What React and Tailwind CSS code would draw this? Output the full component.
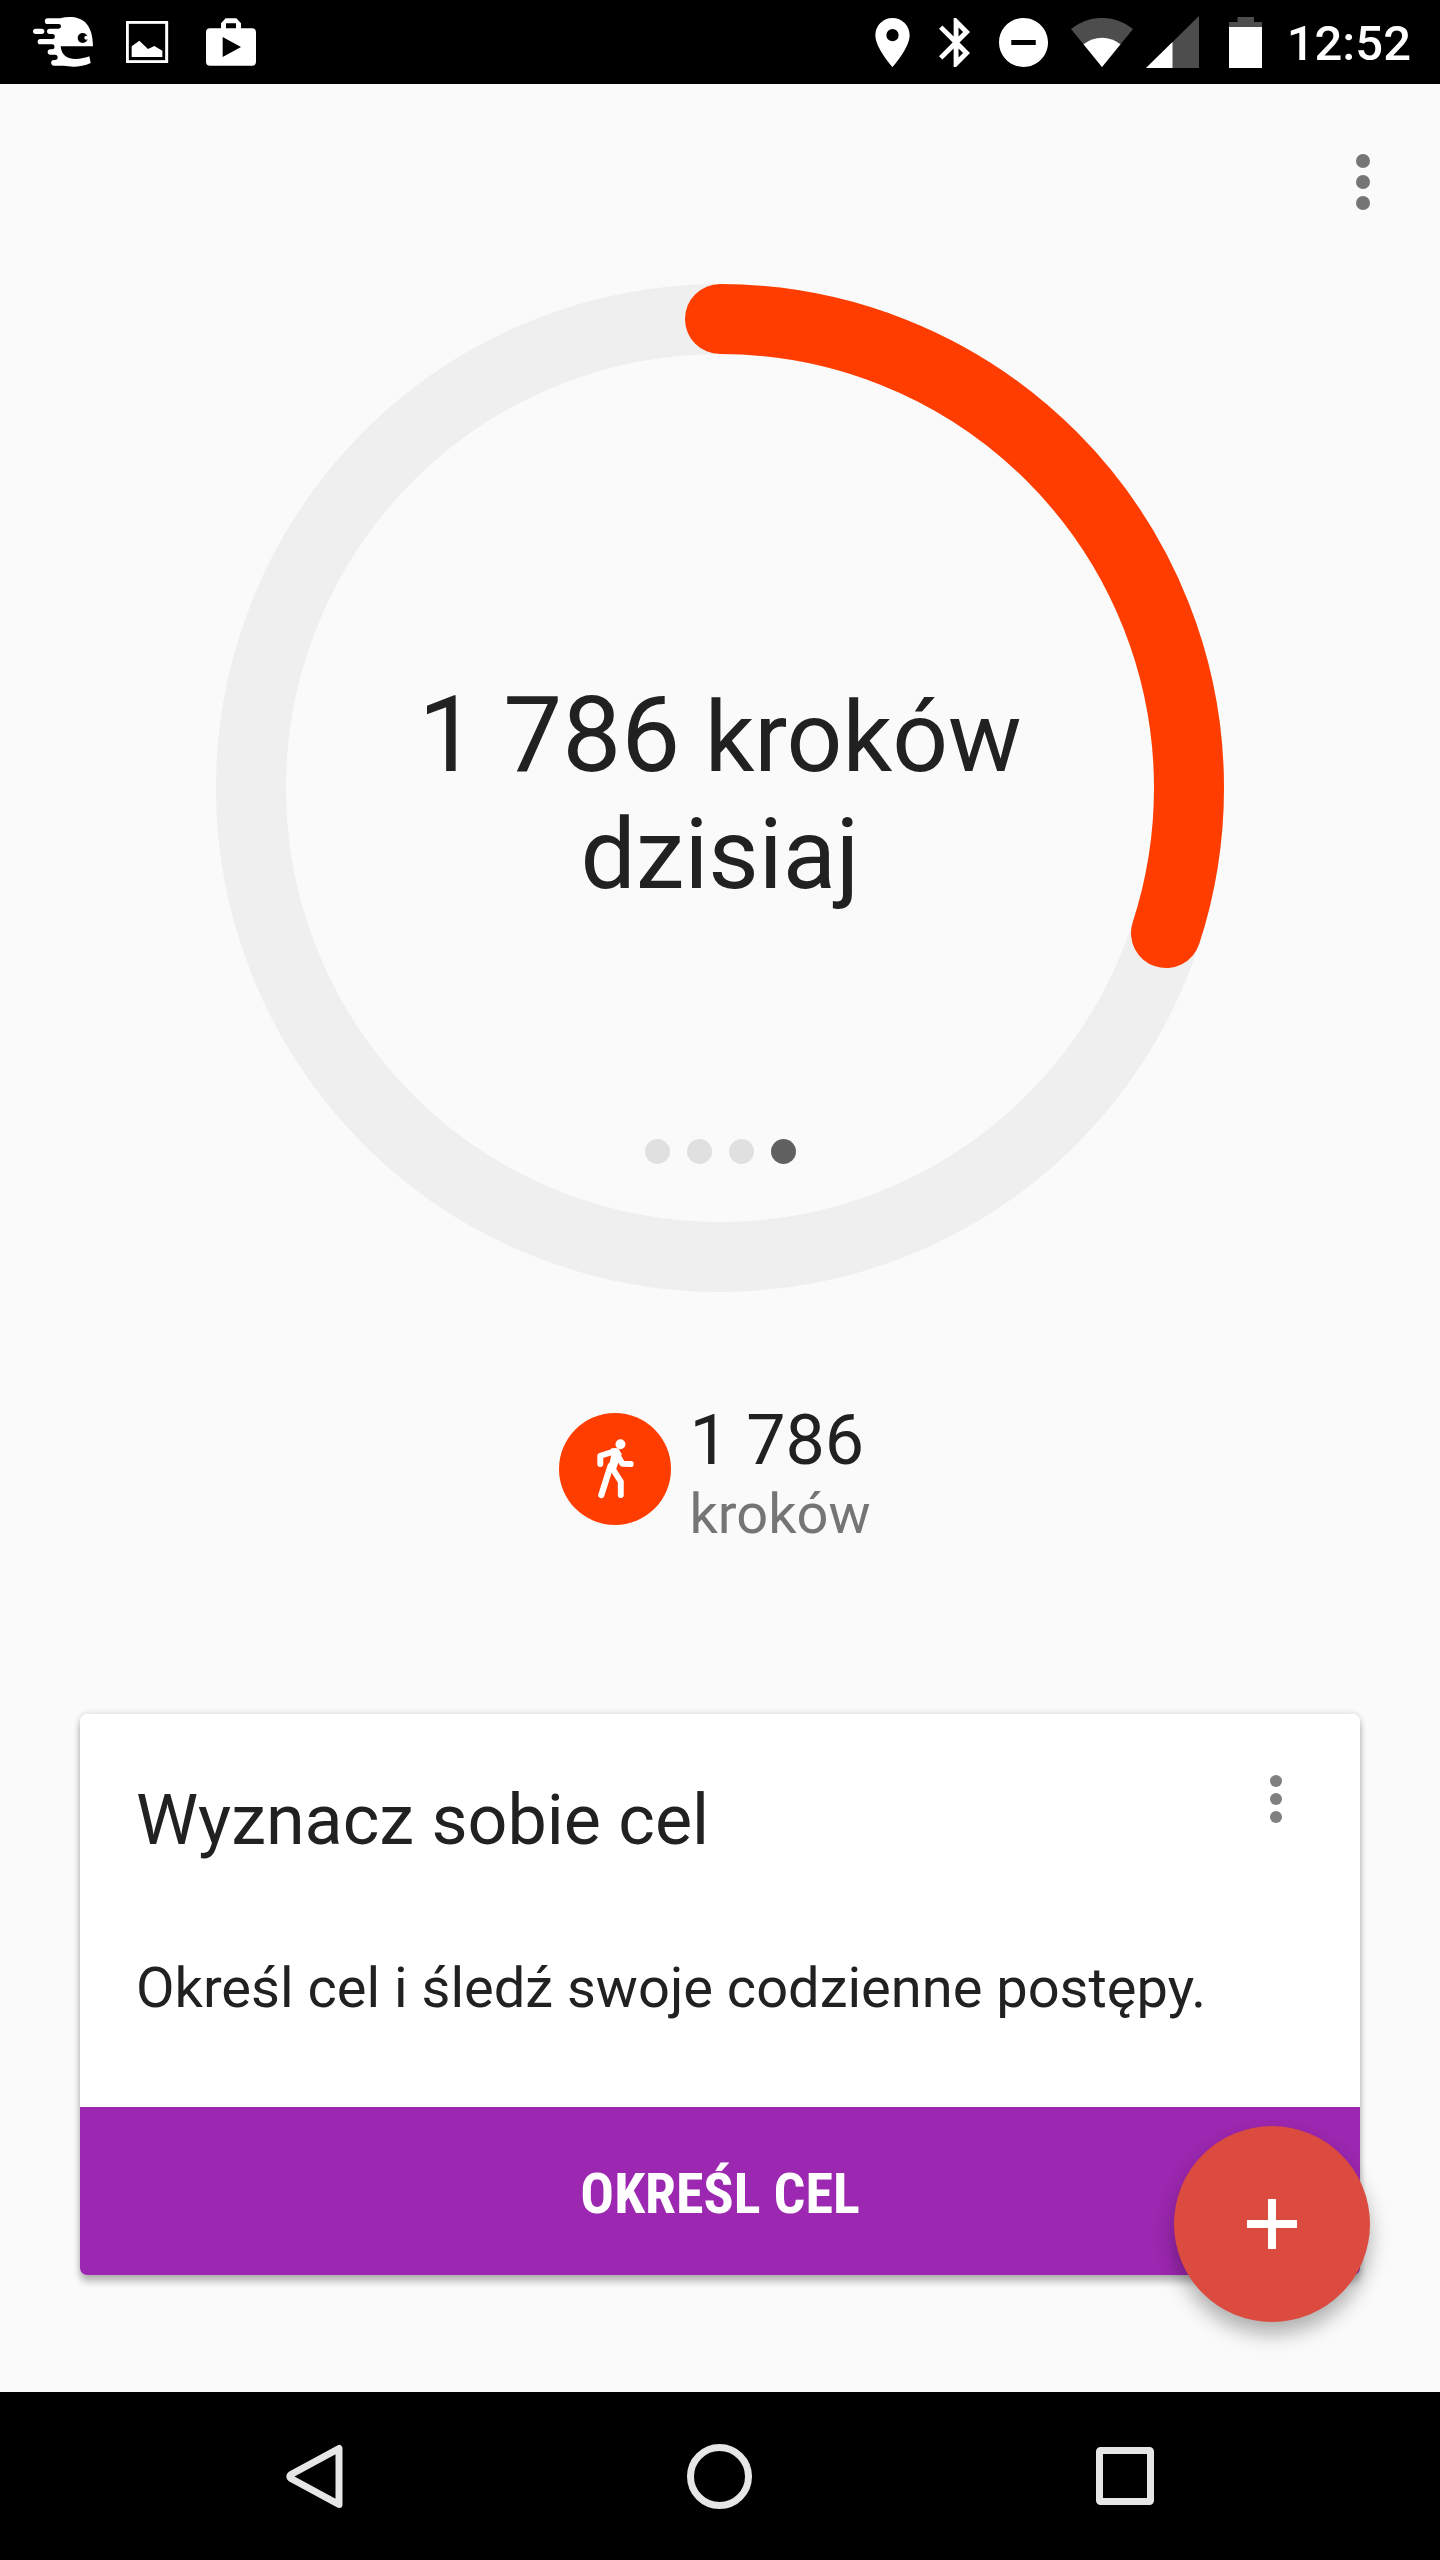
import React from "react";

const GOAL_PERCENT = 30;
const RING_RADIUS = 469;
const RING_LENGTH = 2 * Math.PI * RING_RADIUS;

const pages = ["Aktywność", "Dystans", "Kalorie", "Kroki"];

const RunnerIcon = () => (
  <svg viewBox="99 51 180 150" className="h-[50px] w-[60px]">
    <path
      fill="#fff"
      d="M143 55H180C225 44 279 52 279 139H182C184 168 205 177 225 177C243 177 258 173 268 169L272 189C250 199 225 202 205 199C195 197 188 197 180 197H162a8.5 8.5 0 0 1 0-17H165a8 8 0 0 0 0-16H151a8 8 0 0 1 0-16H156a7.5 7.5 0 0 0 0-15H121a8 8 0 0 1 0-16H157a7.5 7.5 0 0 0 0-15H149a8 8 0 0 1 0-16H176a7 7 0 0 0 0-14H143a8.5 8.5 0 0 1 0-17z"
    />
    <rect x="99" y="86" width="34" height="16" rx="8" fill="#fff" />
    <circle cx="248" cy="114" r="15" fill="#000" />
    <circle cx="259" cy="113" r="6" fill="#fff" />
  </svg>
);

const PictureIcon = () => (
  <svg viewBox="378 63 141 126" className="h-[42px] w-[47px]">
    <rect x="382" y="67" width="118" height="118" fill="none" stroke="#fff" strokeWidth="9" />
    <path fill="#fff" d="M395 171V139L418 122L444 147L463 138L487 152V171z" />
  </svg>
);

const StoreIcon = () => (
  <svg viewBox="618 50 150 144" className="h-12 w-[50px]">
    <path
      fill="#fff"
      fillRule="evenodd"
      d="M663 81V66L677 51H709L723 66V81H756a12 12 0 0 1 12 12V181a12 12 0 0 1-12 12H630a12 12 0 0 1-12-12V93a12 12 0 0 1 12-12zM678 66V81H708V66zM668 107V167L723 137z"
    />
  </svg>
);

const PinIcon = () => (
  <svg viewBox="5 2 14 20" className="h-[49px] w-[35px]">
    <path
      fill="#fff"
      d="M12 2C8.13 2 5 5.13 5 9c0 5.25 7 13 7 13s7-7.75 7-13c0-3.87-3.13-7-7-7zm0 9.5a2.5 2.5 0 0 1 0-5 2.5 2.5 0 0 1 0 5z"
    />
  </svg>
);

const BluetoothIcon = () => (
  <svg viewBox="5 2 12.71 20" className="h-[49px] w-[31px]">
    <path
      fill="#fff"
      d="M17.71 7.71L12 2h-1v7.59L6.41 5 5 6.41 10.59 12 5 17.59 6.41 19 11 14.41V22h1l5.71-5.71-4.3-4.29 4.3-4.29zM13 5.83l1.88 1.88L13 9.59V5.83zm1.88 10.46L13 18.17v-3.76l1.88 1.88z"
    />
  </svg>
);

const DoNotDisturbIcon = () => (
  <svg viewBox="2 2 20 20" className="size-[49px]">
    <path
      fill="#fff"
      d="M12 2C6.48 2 2 6.48 2 12s4.48 10 10 10 10-4.48 10-10S17.52 2 12 2zm5 11H7v-2h10v2z"
    />
  </svg>
);

const WifiIcon = () => (
  <svg viewBox="0 0 62 49" className="h-[49px] w-[62px]">
    <path fill="#4d4d4d" d="M31 49L0 11A49 49 0 0 1 62 11z" />
    <path fill="#fff" d="M31 49L12.5 26.3A29.5 29.5 0 0 1 49.5 26.3z" />
  </svg>
);

const SignalIcon = () => (
  <svg viewBox="0 0 53 52" className="h-[52px] w-[53px]">
    <path fill="#4d4d4d" d="M0 52L53 0V52z" />
    <path fill="#fff" d="M0 52L26.5 26V52z" />
  </svg>
);

const BatteryIcon = () => (
  <svg viewBox="0 0 33 51" className="h-[51px] w-[33px]">
    <path fill="#4d4d4d" d="M8.5 0H25V5H33V51H0V5H8.5z" />
    <path fill="#fff" d="M0 10H33V51H0z" />
  </svg>
);

const WalkIcon = () => (
  <svg viewBox="169 147 112 180" className="h-[60px] w-[37px]">
    <circle cx="240" cy="162" r="15" fill="#fff" />
    <path fill="#fff" d="M212 174H234L244 192L233 220L226 240H202L212 196z" />
    <g fill="none" stroke="#fff" strokeLinecap="round" strokeLinejoin="round">
      <path strokeWidth="18" d="M179 222V197L224 183L246 221L271 222" />
      <path strokeWidth="19" d="M210 228L182 316" />
      <path strokeWidth="18" d="M216 236L241 275V316" />
    </g>
  </svg>
);

const StatusBar = () => (
  <header className="flex h-[84px] items-center justify-between bg-black pl-[33px] pr-[29px]">
    <div className="flex items-center gap-[33px]">
      <RunnerIcon />
      <PictureIcon />
      <StoreIcon />
    </div>
    <div className="flex items-center gap-[23px]">
      <div className="flex items-center gap-[29px]">
        <PinIcon />
        <BluetoothIcon />
        <DoNotDisturbIcon />
      </div>
      <div className="flex items-center gap-[13px]">
        <WifiIcon />
        <SignalIcon />
      </div>
      <div className="flex items-center gap-[25px] pl-[7px]">
        <BatteryIcon />
        <time className="pt-1 text-[49px] font-medium leading-[58px] text-white">
          12:52
        </time>
      </div>
    </div>
  </header>
);

const ProgressRing = () => (
  <section className="mx-auto grid w-[70%]">
    <svg viewBox="0 0 1008 1008" className="col-start-1 row-start-1 w-full">
      <circle cx="504" cy="504" r={RING_RADIUS} fill="none" stroke="#efefef" strokeWidth="70" />
      <circle
        cx="504"
        cy="504"
        r={RING_RADIUS}
        fill="none"
        stroke="#ff3d00"
        strokeWidth="70"
        strokeLinecap="round"
        strokeDasharray={`${(RING_LENGTH * GOAL_PERCENT) / 100} ${RING_LENGTH}`}
        transform="rotate(-90 504 504)"
      />
    </svg>
    <div className="col-start-1 row-start-1 flex flex-col items-center justify-end pb-32">
      <h1 className="text-center text-[98px] leading-[117px]">
        <span className="text-[105px]">1 786</span> kroków
        <br />
        dzisiaj
      </h1>
      <div className="flex gap-[17px] pt-[226px]">
        {pages.map((page, i) => (
          <button
            key={page}
            type="button"
            aria-label={page}
            className={
              i === pages.length - 1
                ? "size-[25px] rounded-full bg-[#616161]"
                : "size-[25px] rounded-full bg-[#e0e0e0]"
            }
          />
        ))}
      </div>
    </div>
  </section>
);

const StepsSummary = () => (
  <section className="flex items-start justify-center pr-[10px] pt-[107px]">
    <div className="mt-[14px] flex size-28 items-center justify-center rounded-full bg-[#ff3d00]">
      <WalkIcon />
    </div>
    <div className="pl-[18px]">
      <p className="text-[70px] leading-[82px]">1 786</p>
      <p className="text-[56px] leading-[66px] text-[#757575]">kroków</p>
    </div>
  </section>
);

const GoalCard = () => (
  <section className="mx-20 mt-[167px] rounded-[7px] bg-white shadow-[0_7px_7px_rgba(0,0,0,0.24),0_0_6px_rgba(0,0,0,0.16)]">
    <div className="flex items-start justify-between pl-14 pr-[64px] pt-[60px]">
      <h2 className="pt-[5px] text-[70px] leading-[82px]">Wyznacz sobie cel</h2>
      <button type="button" aria-label="Opcje karty" className="flex w-10 justify-center">
        <svg viewBox="0 0 12 50" fill="#808080" className="h-[50px] w-3">
          <circle cx="6" cy="7" r="6" />
          <circle cx="6" cy="25" r="6" />
          <circle cx="6" cy="43" r="6" />
        </svg>
      </button>
    </div>
    <p className="px-14 pb-[86px] pt-[94px] text-[56px] leading-[66px]">
      Określ cel i śledź swoje codzienne postępy.
    </p>
    <button
      type="button"
      className="h-[168px] w-full rounded-b-[7px] bg-[#9c27b0] pt-[5px] font-['Roboto_Condensed','Roboto',sans-serif] text-[56px] font-bold leading-[66px] text-white"
    >
      OKREŚL CEL
    </button>
  </section>
);

const NavBar = () => (
  <nav className="flex h-[168px] items-center bg-black px-28">
    <button type="button" aria-label="Wstecz" className="flex flex-1 justify-center">
      <svg viewBox="0 0 57 65" className="h-[65px] w-[57px]" fill="none" stroke="#e6e6e6" strokeWidth="7" strokeLinejoin="round">
        <path d="M53 4.500V60.500L5 34.500Q2.500 32.500 5 30.500z" />
      </svg>
    </button>
    <button type="button" aria-label="Ekran główny" className="flex flex-1 justify-center">
      <svg viewBox="0 0 65 65" className="size-[65px]" fill="none" stroke="#e6e6e6" strokeWidth="7">
        <circle cx="32.500" cy="32.500" r="29" />
      </svg>
    </button>
    <button type="button" aria-label="Ostatnie" className="flex flex-1 justify-center">
      <svg viewBox="0 0 58 58" className="size-[58px]" fill="none" stroke="#e6e6e6" strokeWidth="7" strokeLinejoin="round">
        <rect x="3.500" y="3.500" width="51" height="51" rx="1" />
      </svg>
    </button>
  </nav>
);

const App = () => {
  return (
    <div className="flex min-h-screen flex-col bg-[#fafafa] font-['Roboto',sans-serif] text-[#212121]">
      <StatusBar />
      <main className="relative flex-1 pb-[117px]">
        <div className="flex h-[200px] items-start justify-end pr-[57px] pt-[70px]">
          <button type="button" aria-label="Więcej opcji" className="flex w-10 justify-center">
            <svg viewBox="0 0 14 56" fill="#757575" className="h-14 w-[14px]">
              <circle cx="7" cy="7" r="7" />
              <circle cx="7" cy="28" r="7" />
              <circle cx="7" cy="49" r="7" />
            </svg>
          </button>
        </div>
        <ProgressRing />
        <StepsSummary />
        <GoalCard />
        <button
          type="button"
          aria-label="Dodaj"
          className="absolute bottom-[70px] right-[70px] flex size-[196px] items-center justify-center rounded-full bg-[#dc4b3f] shadow-[0_12px_20px_rgba(0,0,0,0.3)]"
        >
          <svg viewBox="0 0 50 50" fill="#fff" className="size-[50px]">
            <path d="M21 0H29V21H50V29H29V50H21V29H0V21H21z" />
          </svg>
        </button>
      </main>
      <NavBar />
    </div>
  );
};

export default App;
